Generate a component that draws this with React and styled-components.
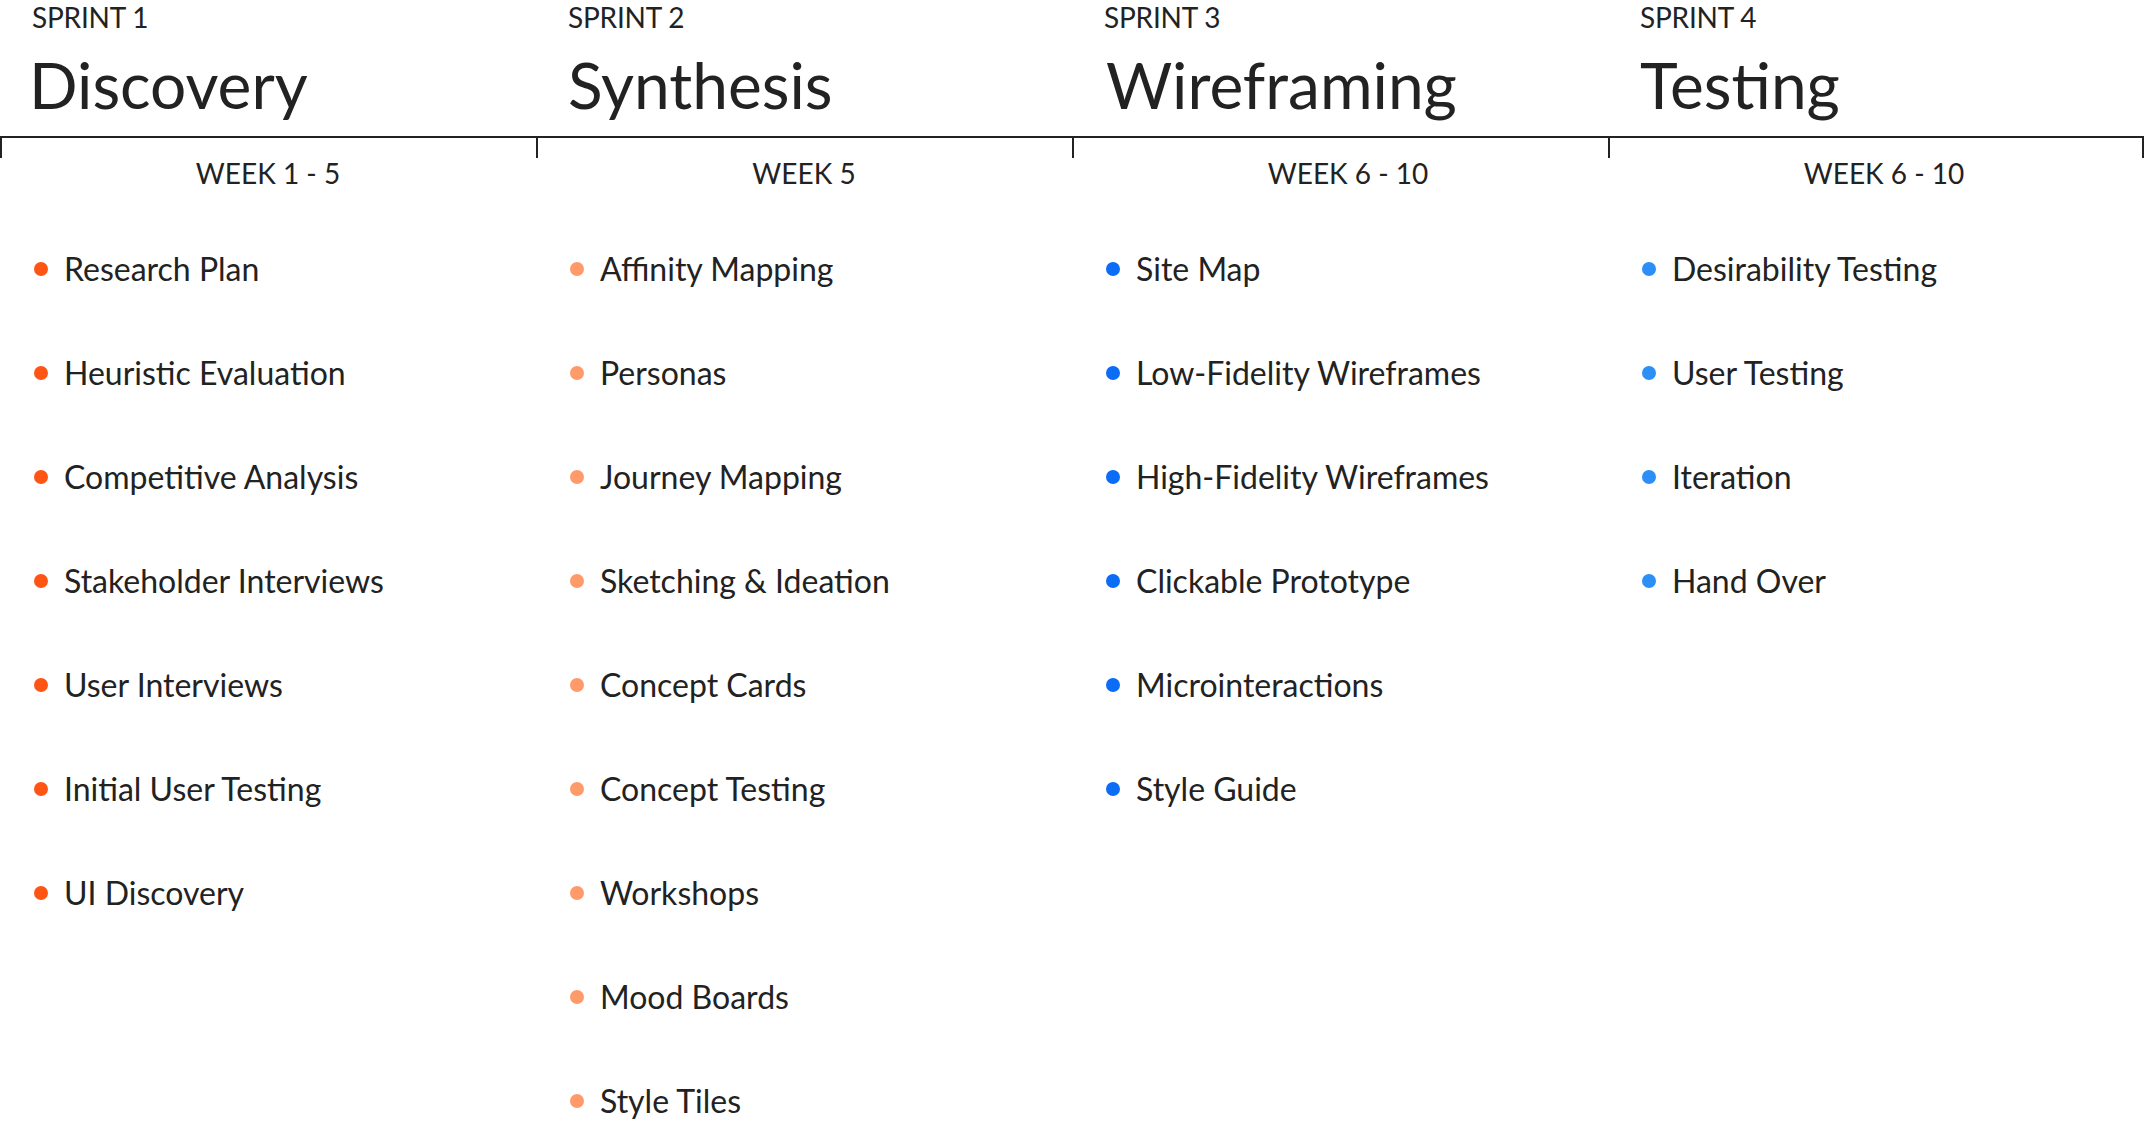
import React from "react";
import styled, { createGlobalStyle } from "styled-components";

const GlobalStyle = createGlobalStyle`
  html, body {
    margin: 0;
    padding: 0;
    background: #ffffff;
  }
  body {
    font-family: Lato, "Open Sans", sans-serif;
    color: #222222;
  }
`;

const Board = styled.div`
  display: grid;
  grid-template-columns: repeat(4, 1fr);
  width: 2144px;
  height: 1128px;
  overflow: hidden;
`;

const Column = styled.section`
  display: flex;
  flex-direction: column;
`;

const Header = styled.header`
  display: flex;
  flex-direction: column;
  gap: 12px;
  padding: 1px 0 13px 32px;
`;

const SprintLabel = styled.div`
  font-size: 28px;
  line-height: 1.2;
  letter-spacing: -0.2px;
`;

const Title = styled.h1`
  margin: 0 0 0 ${(p) => p.$shift || 0}px;
  font-size: 64px;
  font-weight: 400;
  line-height: 1.2;
`;

const Ruler = styled.div`
  height: 20px;
  border-top: 2px solid #222222;
  border-left: 2px solid #222222;
  border-right: ${(p) => (p.$last ? "2px solid #222222" : "none")};
`;

const WeekLabel = styled.div`
  text-align: center;
  font-size: 28px;
  line-height: 1.2;
  margin-top: -1px;
  padding-left: ${(p) => p.$nudge || 0}px;
`;

const List = styled.ul`
  list-style: none;
  margin: 0;
  padding: 59px 0 0 34px;
  display: flex;
  flex-direction: column;
  gap: 66px;
`;

const Item = styled.li`
  display: flex;
  align-items: center;
  gap: 16px;
  font-size: 32px;
  line-height: 38px;
`;

const Dot = styled.span`
  flex: none;
  width: 14px;
  height: 14px;
  border-radius: 50%;
  background: ${(p) => p.$color};
`;

const sprints = [
  {
    sprint: "SPRINT 1",
    title: "Discovery",
    titleShift: -3,
    weeks: "WEEK 1 - 5",
    color: "#ff5514",
    items: [
      "Research Plan",
      "Heuristic Evaluation",
      "Competitive Analysis",
      "Stakeholder Interviews",
      "User Interviews",
      "Initial User Testing",
      "UI Discovery",
    ],
  },
  {
    sprint: "SPRINT 2",
    title: "Synthesis",
    weeks: "WEEK 5",
    color: "#ff9a6a",
    items: [
      "Affinity Mapping",
      "Personas",
      "Journey Mapping",
      "Sketching & Ideation",
      "Concept Cards",
      "Concept Testing",
      "Workshops",
      "Mood Boards",
      "Style Tiles",
    ],
  },
  {
    sprint: "SPRINT 3",
    title: "Wireframing",
    titleShift: 2,
    weeks: "WEEK 6 - 10",
    weeksNudge: 16,
    color: "#0b6cf5",
    items: [
      "Site Map",
      "Low-Fidelity Wireframes",
      "High-Fidelity Wireframes",
      "Clickable Prototype",
      "Microinteractions",
      "Style Guide",
    ],
  },
  {
    sprint: "SPRINT 4",
    title: "Testing",
    weeks: "WEEK 6 - 10",
    weeksNudge: 16,
    color: "#2b8ff7",
    items: ["Desirability Testing", "User Testing", "Iteration", "Hand Over"],
  },
];

export default function App() {
  return (
    <>
      <GlobalStyle />
      <Board>
        {sprints.map((s, i) => (
          <Column key={s.sprint}>
            <Header>
              <SprintLabel>{s.sprint}</SprintLabel>
              <Title $shift={s.titleShift}>{s.title}</Title>
            </Header>
            <Ruler $last={i === sprints.length - 1} />
            <WeekLabel $nudge={s.weeksNudge}>{s.weeks}</WeekLabel>
            <List>
              {s.items.map((item) => (
                <Item key={item}>
                  <Dot $color={s.color} />
                  {item}
                </Item>
              ))}
            </List>
          </Column>
        ))}
      </Board>
    </>
  );
}
